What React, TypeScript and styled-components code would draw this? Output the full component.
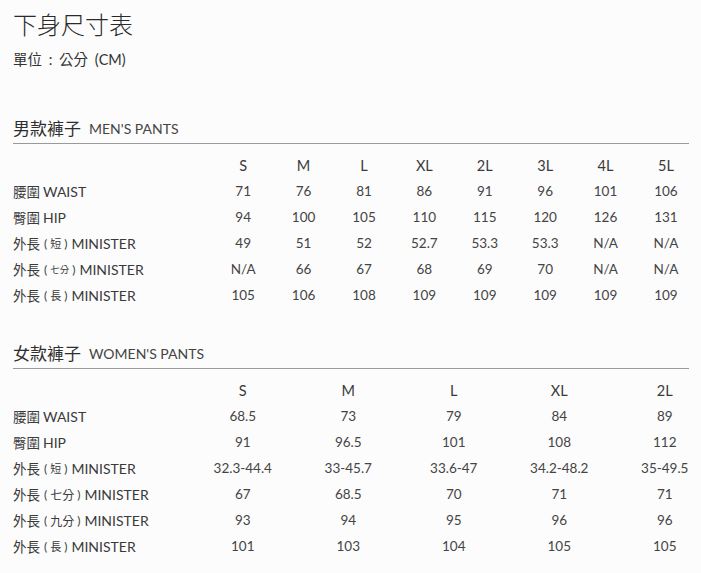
import styled, { createGlobalStyle } from "styled-components";

const GlobalStyle = createGlobalStyle`
  body {
    margin: 0;
    background: #fcfcfc;
    overflow: hidden;
    font-family: Lato, "Noto Sans CJK TC", sans-serif;
    color: #444;
  }
`

const Page = styled.div`
  padding: 8px 0 0 13px;
`
const Title = styled.h1`
  margin: 0;
  font-family: "Noto Sans CJK TC", sans-serif;
  font-weight: 300;
  font-size: 24px;
  line-height: 32px;
  color: #2a2a2a;
`
const Unit = styled.div`
  margin-top: 10px;
  font-size: 14.5px;
  line-height: 20px;
  word-spacing: 3px;
  color: #333;
`
const Section = styled.section<{ $gap: number }>`
  margin-top: ${(p) => p.$gap}px;
`
const Heading = styled.div`
  width: 676px;
  height: 24px;
  padding-bottom: 4px;
  border-bottom: 1px solid #9a9a9a;
  display: flex;
  align-items: center;
  font-family: "Noto Sans CJK TC", sans-serif;
  font-size: 17px;
  color: #2e2e2e;
`
const Eng = styled.span`
  margin-left: 8px;
  font-family: Lato, sans-serif;
  font-size: 14px;
  padding-top: 2px;
  color: #444;
`
const Table = styled.div<{ $label: number; $col: number; $count: number }>`
  margin-top: 8px;
  display: grid;
  grid-template-columns: ${(p) => p.$label}px repeat(${(p) => p.$count}, ${(p) => p.$col}px);
  grid-auto-rows: 26px;
  font-size: 13.5px;
`
const Row = styled.div`
  display: contents;
`
const Cell = styled.div``
const Head = styled.div`
  display: flex;
  align-items: center;
  justify-content: center;
  font-size: 14.5px;
  color: #3a3a3a;
`
const Value = styled.div`
  display: flex;
  align-items: center;
  justify-content: center;
  white-space: nowrap;
`
const Label = styled.div`
  display: flex;
  align-items: center;
  white-space: nowrap;
  font-size: 14px;
  color: #3a3a3a;
`
const Zh = styled.span`
  font-family: "Noto Sans CJK TC", sans-serif;
  font-size: 13.5px;
  margin-right: 3px;
`
const Paren = styled.span`
  margin: 0 4px 0 1px;
  font-size: 12px;
  display: inline-flex;
  align-items: center;
`
const Tiny = styled.span<{ $size: number }>`
  font-family: "Noto Sans CJK TC", sans-serif;
  font-size: ${(p) => p.$size}px;
  margin: 0 3px;
`

interface iRow {
  label: React.ReactNode;
  values: string[];
}

const Len = ({ part, size }: { part: string; size: number }) => (
  <>
    <Zh>外長</Zh>
    <Paren>(<Tiny $size={size}>{part}</Tiny>)</Paren>
    MINISTER
  </>
)

const menSizes = ["S", "M", "L", "XL", "2L", "3L", "4L", "5L"];
const menRows: iRow[] = [
  { label: <><Zh>腰圍</Zh>WAIST</>, values: ["71", "76", "81", "86", "91", "96", "101", "106"] },
  { label: <><Zh>臀圍</Zh>HIP</>, values: ["94", "100", "105", "110", "115", "120", "126", "131"] },
  { label: <Len part="短" size={11} />, values: ["49", "51", "52", "52.7", "53.3", "53.3", "N/A", "N/A"] },
  { label: <Len part="七分" size={9.5} />, values: ["N/A", "66", "67", "68", "69", "70", "N/A", "N/A"] },
  { label: <Len part="長" size={11} />, values: ["105", "106", "108", "109", "109", "109", "109", "109"] },
];

const womenSizes = ["S", "M", "L", "XL", "2L"];
const womenRows: iRow[] = [
  { label: <><Zh>腰圍</Zh>WAIST</>, values: ["68.5", "73", "79", "84", "89"] },
  { label: <><Zh>臀圍</Zh>HIP</>, values: ["91", "96.5", "101", "108", "112"] },
  { label: <Len part="短" size={11} />, values: ["32.3-44.4", "33-45.7", "33.6-47", "34.2-48.2", "35-49.5"] },
  { label: <Len part="七分" size={12} />, values: ["67", "68.5", "70", "71", "71"] },
  { label: <Len part="九分" size={12} />, values: ["93", "94", "95", "96", "96"] },
  { label: <Len part="長" size={11} />, values: ["101", "103", "104", "105", "105"] },
];

const App = () => {
  return (
    <Page>
      <GlobalStyle />
      <Title>下身尺寸表</Title>
      <Unit>單位 : 公分 (CM)</Unit>

      <Section $gap={45}>
        <Heading>男款褲子<Eng>MEN'S PANTS</Eng></Heading>
        <Table $label={200} $col={60.4} $count={8}>
          <Cell />
          {menSizes.map((s) => <Head key={s}>{s}</Head>)}
          {menRows.map((r, i) => (
            <Row key={i}>
              <Label>{r.label}</Label>
              {r.values.map((v, j) => <Value key={j}>{v}</Value>)}
            </Row>
          ))}
        </Table>
      </Section>

      <Section $gap={32}>
        <Heading>女款褲子<Eng>WOMEN'S PANTS</Eng></Heading>
        <Table $label={177} $col={105.5} $count={5}>
          <Cell />
          {womenSizes.map((s) => <Head key={s}>{s}</Head>)}
          {womenRows.map((r, i) => (
            <Row key={i}>
              <Label>{r.label}</Label>
              {r.values.map((v, j) => <Value key={j}>{v}</Value>)}
            </Row>
          ))}
        </Table>
      </Section>
    </Page>
  )
}

export default App;
